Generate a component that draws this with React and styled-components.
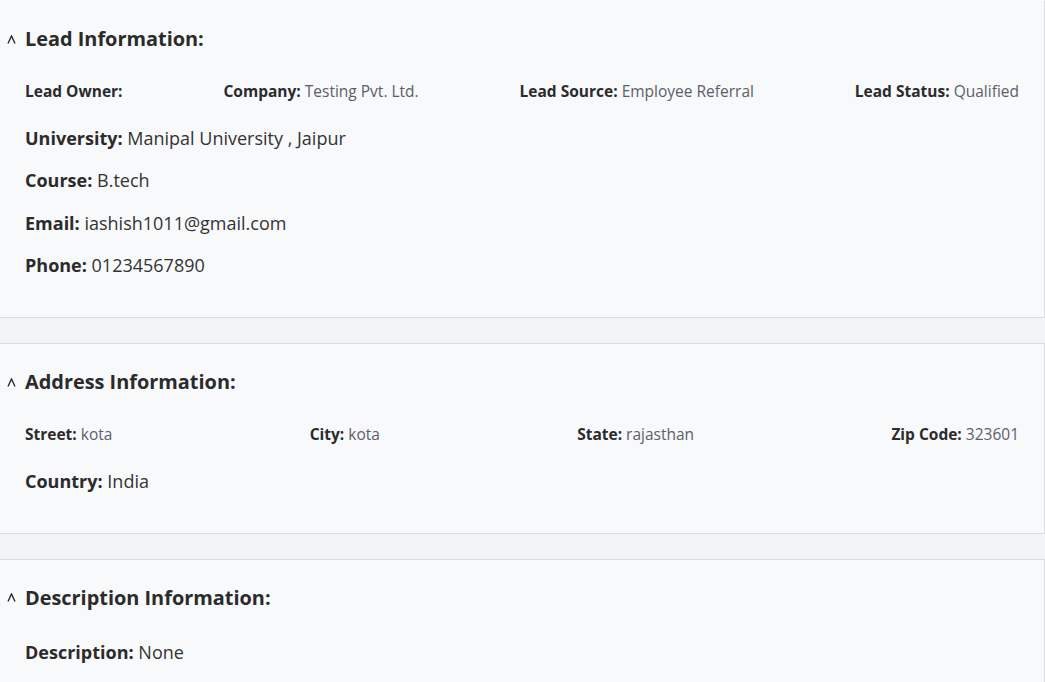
import React from "react";
import styled, { createGlobalStyle } from "styled-components";

const GlobalStyle = createGlobalStyle`
  html, body {
    margin: 0;
    padding: 0;
    background: #f3f4f7;
  }
  body {
    font-family: "Open Sans", "Liberation Sans", sans-serif;
    color: #2b2b2b;
  }
`;

const sections = [
  {
    title: "Lead Information:",
    row: [
      ["Lead Owner:", ""],
      ["Company:", "Testing Pvt. Ltd."],
      ["Lead Source:", "Employee Referral"],
      ["Lead Status:", "Qualified"],
    ],
    lines: [
      ["University:", "Manipal University , Jaipur"],
      ["Course:", "B.tech"],
      ["Email:", "iashish1011@gmail.com"],
      ["Phone:", "01234567890"],
    ],
  },
  {
    title: "Address Information:",
    row: [
      ["Street:", "kota"],
      ["City:", "kota"],
      ["State:", "rajasthan"],
      ["Zip Code:", "323601"],
    ],
    lines: [["Country:", "India"]],
  },
  {
    title: "Description Information:",
    lines: [["Description:", "None"]],
  },
];

export default function App() {
  return (
    <Page>
      <GlobalStyle />
      {sections.map((s) => (
        <Card key={s.title}>
          <Header>
            <Caret viewBox="0 0 9 9">
              <polyline points="1,8.5 4.5,1 8,8.5" />
            </Caret>
            <Title>{s.title}</Title>
          </Header>
          {s.row && (
            <Row>
              {s.row.map(([label, value]) => (
                <SmallField key={label}>
                  <Label>{label}</Label>
                  {value && <> {value}</>}
                </SmallField>
              ))}
            </Row>
          )}
          <Lines $afterRow={!!s.row}>
            {s.lines.map(([label, value]) => (
              <Field key={label}>
                <Label>{label}</Label> {value}
              </Field>
            ))}
          </Lines>
        </Card>
      ))}
    </Page>
  );
}

const Page = styled.div`
  display: flex;
  flex-direction: column;
  gap: 25px;
  min-height: 100vh;
`;

const Card = styled.section`
  width: 1045px;
  box-sizing: border-box;
  background: #f8f9fb;
  border: 1px solid #dcdde1;
  border-left: none;
  padding: 25px 25px 40px 25px;

  &:first-child {
    border-top-color: transparent;
  }
`;

const Header = styled.div`
  display: flex;
  align-items: center;
  margin-left: -18px;
  gap: 9px;
`;

const Caret = styled.svg`
  width: 9px;
  height: 9px;
  fill: none;
  stroke: #2b2b2b;
  stroke-width: 1.4;
`;

const Title = styled.h2`
  margin: 0;
  font-size: 19.9px;
  line-height: 26px;
  font-weight: 700;
  color: #2b2b2b;
`;

const Row = styled.div`
  display: flex;
  justify-content: space-between;
  margin-top: 28.5px;
`;

const SmallField = styled.div`
  font-size: 15.5px;
  line-height: 20px;
  color: #5b6068;
`;

const Label = styled.b`
  font-weight: 700;
  color: #2b2b2b;
`;

const Lines = styled.div`
  display: flex;
  flex-direction: column;
  gap: 18.5px;
  margin-top: ${(p) => (p.$afterRow ? "25px" : "29px")};
`;

const Field = styled.div`
  font-size: 18px;
  line-height: 24px;
  color: #333333;
`;
